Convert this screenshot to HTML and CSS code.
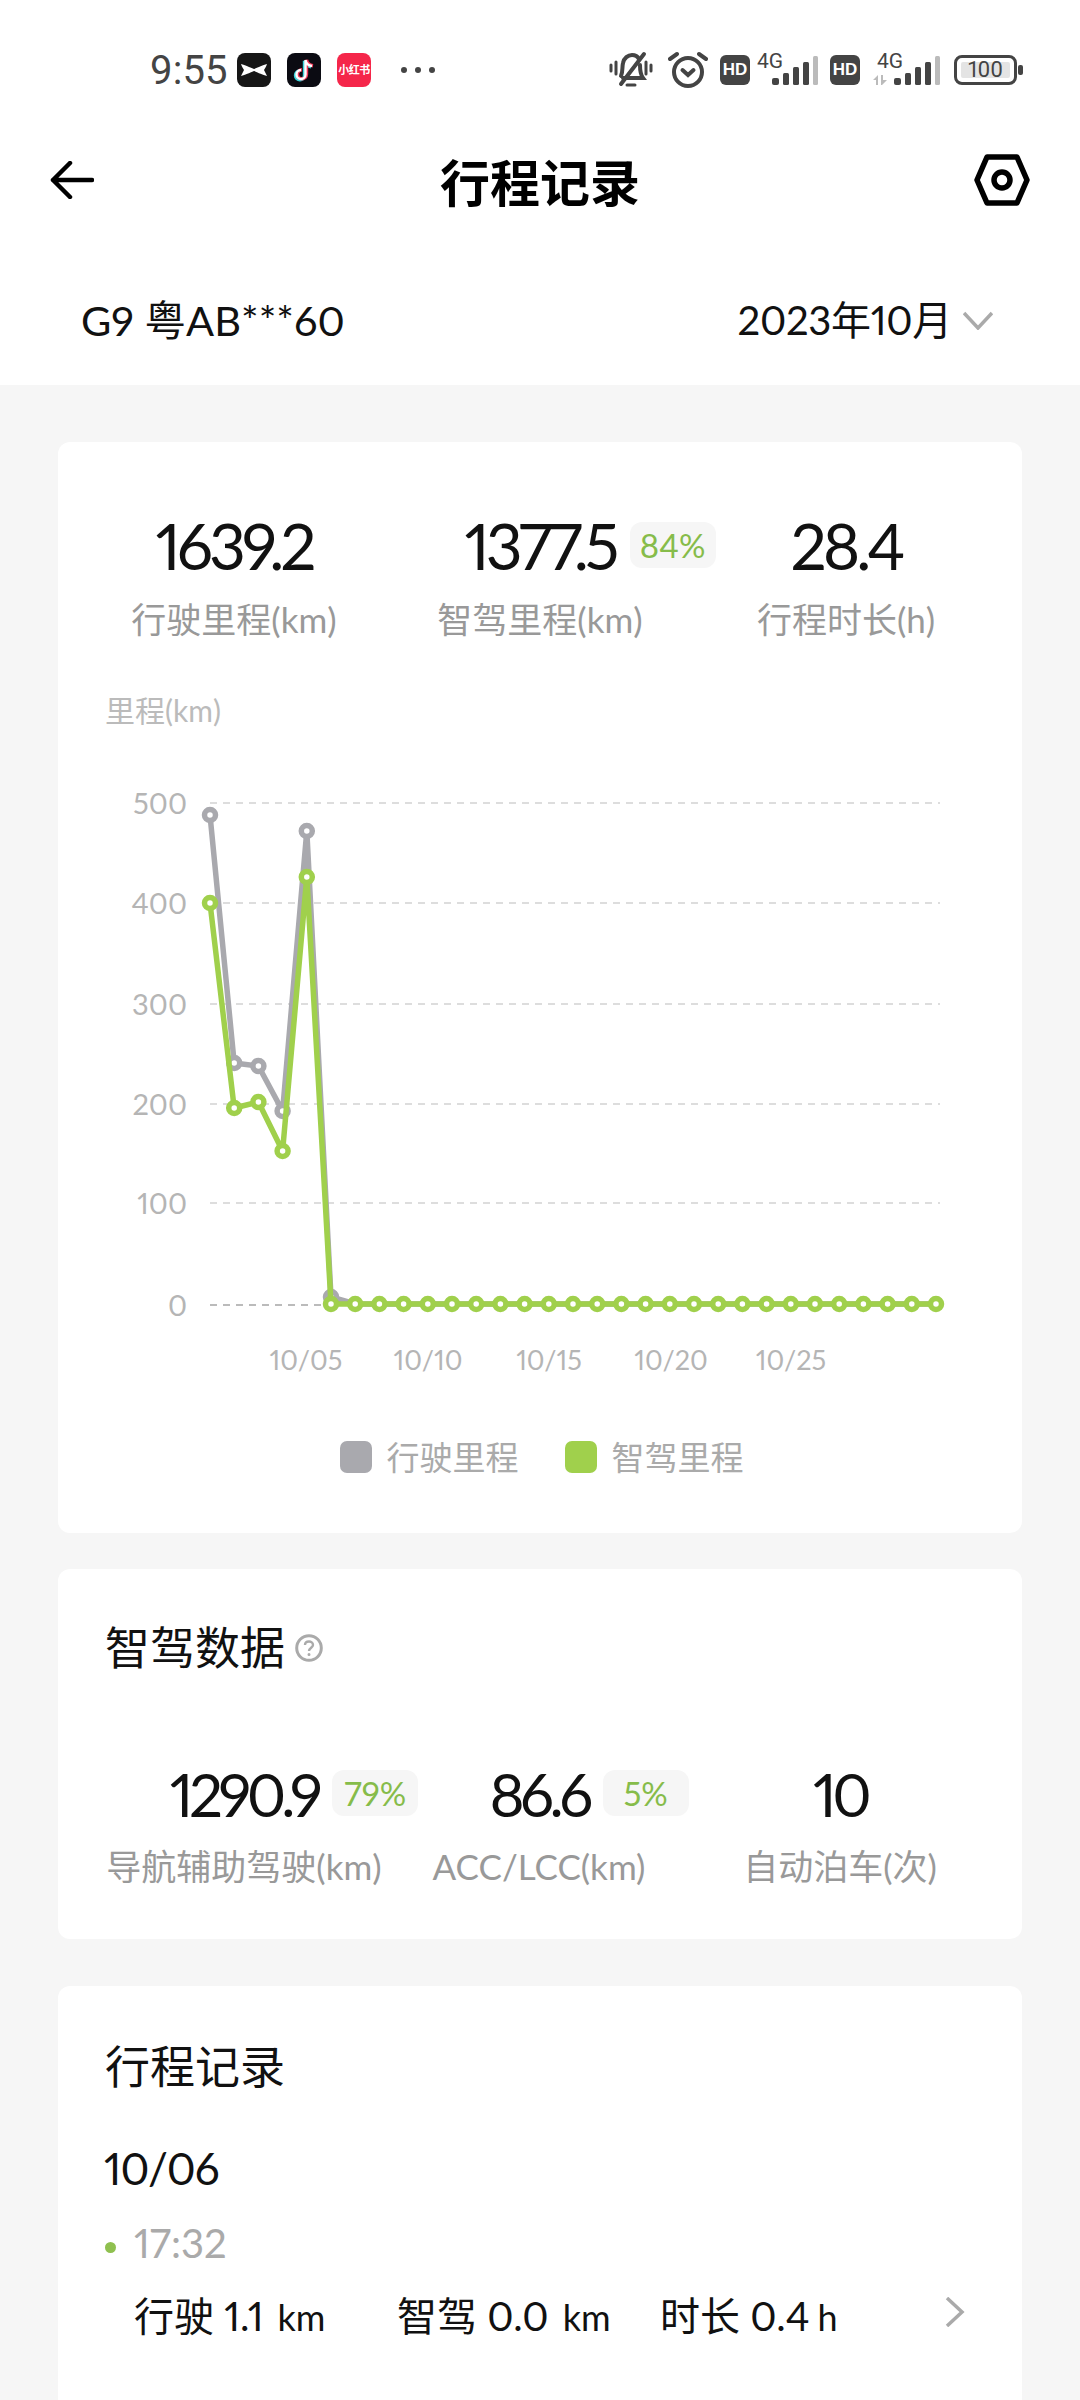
FILE: index.html
```html
<!DOCTYPE html>
<html>
<head>
    <title>行程记录</title>
    <meta name="viewport" content="width=device-width, initial-scale=1">
    <link rel="stylesheet" href="styles.css">
</head>
<body>
    <div class="top">
        <div class="status">
            <div class="status-left">
                <span class="clock">9:55</span>
                <svg class="app-icon" viewBox="0 0 34 34">
                    <rect width="34" height="34" rx="8" fill="#161616"/>
                    <path d="M4 11 C11 13 14 15 17 16 C20 15 23 13 30 11 C29 14 28 15 27 17 C28 19 29 21 30 23 C23 21 20 19 17 18 C14 19 11 21 4 23 C5 21 6 19 7 17 C6 15 5 14 4 11Z" fill="#fff"/>
                </svg>
                <svg class="app-icon" viewBox="0 0 34 34">
                    <rect width="34" height="34" rx="8" fill="#0b0b12"/>
                    <path d="M18.5 7 V21.5 A4.5 4.5 0 1 1 14 17 M18.5 7 C19 10.5 21.5 12.5 25 13" fill="none" stroke="#3fd6de" stroke-width="3.4" transform="translate(-1 .8)"/>
                    <path d="M18.5 7 V21.5 A4.5 4.5 0 1 1 14 17 M18.5 7 C19 10.5 21.5 12.5 25 13" fill="none" stroke="#f0395a" stroke-width="3.4" transform="translate(1 -.2)"/>
                    <path d="M18.5 7 V21.5 A4.5 4.5 0 1 1 14 17 M18.5 7 C19 10.5 21.5 12.5 25 13" fill="none" stroke="#fff" stroke-width="2.4"/>
                </svg>
                <span class="app-red">小红书</span>
                <span class="more"><i></i><i></i><i></i></span>
            </div>
            <div class="status-right">
                <svg class="ic-bell" viewBox="0 0 44 38" fill="none" stroke="#444" stroke-width="4" stroke-linecap="round">
                    <path d="M12 25 C14 21 13 16 14 12 C15 7 19 4 23 4 C26 4 29 6 30 8 M31 14 C31 19 31 23 34 27 H14"/>
                    <path d="M18 34 H26" stroke-width="3"/>
                    <path d="M12 33 L35 3"/>
                    <path d="M2 14 V20 M7 11 V23 M37 11 V23 M42 14 V20" stroke-width="3"/>
                </svg>
                <svg class="ic-alarm" viewBox="0 0 40 38" fill="none" stroke="#444" stroke-width="4" stroke-linecap="round">
                    <circle cx="20" cy="21" r="14"/>
                    <path d="M14.5 19 L20 24 L25.5 19"/>
                    <path d="M2 8 L9 3 M38 8 L31 3"/>
                </svg>
                <span class="hd">HD</span>
                <svg class="ic-signal" viewBox="0 -8 61 41">
                    <text class="net" x="0" y="16">4G</text>
                    <rect x="15" y="26" width="7" height="7" rx="2" fill="#444"/>
                    <rect x="26" y="21" width="6" height="12" rx="1.5" fill="#444"/>
                    <rect x="36" y="15" width="6" height="18" rx="1.5" fill="#444"/>
                    <rect x="46" y="10" width="6" height="23" rx="1.5" fill="#444"/>
                    <rect x="56" y="4" width="5" height="29" rx="1.5" fill="#bbb"/>
                </svg>
                <span class="hd">HD</span>
                <svg class="ic-signal2" viewBox="0 -8 67 41">
                    <text class="net" x="4" y="16">4G</text>
                    <path d="M0 28 L5 23 V33 H3 V28Z M8 23 H10 V28 L14 28 L8 34Z" fill="#bbb"/>
                    <rect x="21" y="26" width="7" height="7" rx="2" fill="#444"/>
                    <rect x="32" y="21" width="6" height="12" rx="1.5" fill="#444"/>
                    <rect x="42" y="15" width="6" height="18" rx="1.5" fill="#444"/>
                    <rect x="52" y="10" width="6" height="23" rx="1.5" fill="#444"/>
                    <rect x="62" y="4" width="5" height="29" rx="1.5" fill="#bbb"/>
                </svg>
                <span class="battery"><span class="battery-fill">100</span></span>
                <span class="battery-nub"></span>
            </div>
        </div>

        <div class="nav">
            <svg class="ic-back" viewBox="0 0 44 38" fill="none" stroke="#000" stroke-width="4.5" stroke-linecap="round" stroke-linejoin="round">
                <path d="M42 19 H3 M20 2 L3 19 L20 36"/>
            </svg>
            <div class="nav-title">行程记录</div>
            <svg class="ic-hex" viewBox="0 0 56 52" fill="none" stroke="#000" stroke-width="5.5" stroke-linejoin="round">
                <path d="M13 3 H43 L53 26 L43 49 H13 L3 26Z"/>
                <circle cx="28" cy="26" r="8"/>
            </svg>
        </div>

        <div class="vehicle">
            <span class="plate">G9 粤AB***60</span>
            <span class="month">2023年10月
                <svg class="ic-down" viewBox="0 0 30 19" fill="none" stroke="#aaa" stroke-width="3.5">
                    <path d="M1 2 L15 17 L29 2"/>
                </svg>
            </span>
        </div>
    </div>

    <div class="content">
        <div class="card card-summary">
            <div class="stats">
                <div class="stat">
                    <div class="stat-num">1639.2</div>
                    <div class="stat-label">行驶里程(km)</div>
                </div>
                <div class="stat">
                    <div class="stat-num">1377.5<span class="pct">84%</span></div>
                    <div class="stat-label">智驾里程(km)</div>
                </div>
                <div class="stat">
                    <div class="stat-num">28.4</div>
                    <div class="stat-label">行程时长(h)</div>
                </div>
            </div>

            <div class="axis-title">里程(km)</div>

            <!-- viewBox uses page coordinates so points read the same as the screen -->
            <svg class="chart" viewBox="58 780 964 610">
                <g class="grid">
                    <line x1="210" y1="803" x2="940" y2="803"/>
                    <line x1="210" y1="903" x2="940" y2="903"/>
                    <line x1="210" y1="1004" x2="940" y2="1004"/>
                    <line x1="210" y1="1104" x2="940" y2="1104"/>
                    <line x1="210" y1="1203" x2="940" y2="1203"/>
                    <line class="grid-zero" x1="210" y1="1305" x2="940" y2="1305"/>
                </g>
                <g class="y-labels">
                    <text x="187" y="814">500</text>
                    <text x="187" y="914">400</text>
                    <text x="187" y="1015">300</text>
                    <text x="187" y="1115">200</text>
                    <text x="187" y="1214">100</text>
                    <text x="187" y="1316">0</text>
                </g>
                <g class="x-labels">
                    <text x="306" y="1370">10/05</text>
                    <text x="428" y="1370">10/10</text>
                    <text x="549" y="1370">10/15</text>
                    <text x="671" y="1370">10/20</text>
                    <text x="791" y="1370">10/25</text>
                </g>
                <g class="series series-gray">
                    <polyline points="210,815 234.2,1063 258.4,1066 282.6,1111 306.8,831 331,1297 355.2,1304 936,1304"/>
                    <circle cx="210" cy="815" r="5.5"/>
                    <circle cx="234.2" cy="1063" r="5.5"/>
                    <circle cx="258.4" cy="1066" r="5.5"/>
                    <circle cx="282.6" cy="1111" r="5.5"/>
                    <circle cx="306.8" cy="831" r="5.5"/>
                    <circle cx="331" cy="1297" r="5.5"/>
                </g>
                <g class="series series-green">
                    <polyline points="210,903 234.2,1108 258.4,1102 282.6,1151 306.8,877 331,1304 936,1304"/>
                    <circle cx="210" cy="903" r="5.5"/>
                    <circle cx="234.2" cy="1108" r="5.5"/>
                    <circle cx="258.4" cy="1102" r="5.5"/>
                    <circle cx="282.6" cy="1151" r="5.5"/>
                    <circle cx="306.8" cy="877" r="5.5"/>
                    <circle cx="331" cy="1304" r="5.5"/>
                    <circle cx="355.2" cy="1304" r="5.5"/>
                    <circle cx="379.4" cy="1304" r="5.5"/>
                    <circle cx="403.6" cy="1304" r="5.5"/>
                    <circle cx="427.8" cy="1304" r="5.5"/>
                    <circle cx="452" cy="1304" r="5.5"/>
                    <circle cx="476.2" cy="1304" r="5.5"/>
                    <circle cx="500.4" cy="1304" r="5.5"/>
                    <circle cx="524.6" cy="1304" r="5.5"/>
                    <circle cx="548.8" cy="1304" r="5.5"/>
                    <circle cx="573" cy="1304" r="5.5"/>
                    <circle cx="597.2" cy="1304" r="5.5"/>
                    <circle cx="621.4" cy="1304" r="5.5"/>
                    <circle cx="645.6" cy="1304" r="5.5"/>
                    <circle cx="669.8" cy="1304" r="5.5"/>
                    <circle cx="694" cy="1304" r="5.5"/>
                    <circle cx="718.2" cy="1304" r="5.5"/>
                    <circle cx="742.4" cy="1304" r="5.5"/>
                    <circle cx="766.6" cy="1304" r="5.5"/>
                    <circle cx="790.8" cy="1304" r="5.5"/>
                    <circle cx="815" cy="1304" r="5.5"/>
                    <circle cx="839.2" cy="1304" r="5.5"/>
                    <circle cx="863.4" cy="1304" r="5.5"/>
                    <circle cx="887.6" cy="1304" r="5.5"/>
                    <circle cx="911.8" cy="1304" r="5.5"/>
                    <circle cx="936" cy="1304" r="5.5"/>
                </g>
            </svg>

            <div class="legend">
                <span class="legend-item"><i class="swatch swatch-gray"></i>行驶里程</span>
                <span class="legend-item"><i class="swatch swatch-green"></i>智驾里程</span>
            </div>
        </div>

        <div class="card card-assist">
            <div class="card-title">智驾数据
                <svg class="ic-help" viewBox="0 0 28 28" fill="none" stroke="#aaa" stroke-width="3">
                    <circle cx="14" cy="14" r="12.3"/>
                    <path d="M10 11 C10 8.5 12 7.5 14 7.5 C16 7.5 18 8.8 18 11 C18 13.5 14 14 14 17" stroke-width="2.4"/>
                    <circle cx="14" cy="20.5" r=".7" stroke-width="1.6"/>
                </svg>
            </div>
            <div class="stats stats-assist">
                <div class="stat">
                    <div class="stat-num stat-num-sm">1290.9<span class="pct">79%</span></div>
                    <div class="stat-label">导航辅助驾驶(km)</div>
                </div>
                <div class="stat">
                    <div class="stat-num stat-num-sm">86.6<span class="pct">5%</span></div>
                    <div class="stat-label">ACC/LCC(km)</div>
                </div>
                <div class="stat">
                    <div class="stat-num stat-num-sm">10</div>
                    <div class="stat-label">自动泊车(次)</div>
                </div>
            </div>
        </div>

        <div class="card card-trips">
            <div class="card-title">行程记录</div>
            <div class="trip-date">10/06</div>
            <div class="trip-time"><i class="dot"></i>17:32</div>
            <div class="trip-row">
                <span class="trip-cell">行驶 <b>1.1</b><small>km</small></span>
                <span class="trip-cell">智驾 <b>0.0</b><small>km</small></span>
                <span class="trip-cell">时长 <b>0.4</b><small class="unit-h">h</small></span>
                <svg class="ic-right" viewBox="0 0 20 30" fill="none" stroke="#aaa" stroke-width="3.5">
                    <path d="M2 1 L17 15 L2 29"/>
                </svg>
            </div>
        </div>
    </div>
</body>
</html>
```

FILE: styles.css
```css
html, body {
    margin: 0;
    padding: 0;
}
body {
    width: 1080px;
    height: 2400px;
    overflow: hidden;
    background: #f6f6f6;
    font-family: Lato, "Noto Sans CJK SC", sans-serif;
    font-variant-numeric: proportional-nums;
    color: #111;
}
.top {
    background: #fff;
    height: 385px;
}

/* status bar */
.status {
    height: 140px;
    display: flex;
    align-items: center;
    justify-content: space-between;
    padding: 0 57px 0 150px;
}
.status-left, .status-right {
    display: flex;
    align-items: center;
}
.clock {
    width: 87px;
    font-family: Roboto, sans-serif;
    font-size: 40px;
    color: #444;
}
.app-icon {
    width: 34px;
    height: 34px;
    margin-right: 16px;
}
.app-red {
    width: 34px;
    height: 34px;
    line-height: 34px;
    border-radius: 8px;
    background: #f5264a;
    color: #fff;
    font-size: 11px;
    font-weight: bold;
    letter-spacing: -0.5px;
    text-align: center;
    white-space: nowrap;
}
.more {
    display: flex;
    gap: 8px;
    margin-left: 30px;
}
.more i {
    width: 6px;
    height: 6px;
    border-radius: 50%;
    background: #444;
}
.ic-bell {
    width: 44px;
    height: 38px;
    margin-right: 15px;
}
.ic-alarm {
    width: 40px;
    height: 38px;
    margin-right: 12px;
}
.hd {
    width: 30px;
    height: 30px;
    line-height: 30px;
    border-radius: 6px;
    background: #444;
    color: #fff;
    font-family: "Liberation Sans", sans-serif;
    font-size: 17px;
    font-weight: bold;
    text-align: center;
}
.ic-signal {
    width: 61px;
    height: 41px;
    margin: 0 12px 11px 7px;
}
.ic-signal2 {
    width: 67px;
    height: 41px;
    margin: 0 14px 11px 13px;
}
.net {
    font-family: Roboto, sans-serif;
    font-size: 21px;
    fill: #444;
}
.battery {
    box-sizing: border-box;
    width: 63px;
    height: 30px;
    padding: 4px;
    border: 3px solid #444;
    border-radius: 8px;
    display: flex;
}
.battery-fill {
    flex: 1;
    background: #e4e4e4;
    border-radius: 2px;
    color: #444;
    font-family: Roboto, sans-serif;
    font-size: 22px;
    line-height: 16px;
    text-align: center;
}
.battery-nub {
    width: 5px;
    height: 10px;
    margin-left: 1px;
    border-radius: 2px;
    background: #444;
}

/* nav */
.nav {
    height: 80px;
    display: grid;
    grid-template-columns: 1fr auto 1fr;
    align-items: center;
    padding: 0 50px;
}
.nav-title {
    font-size: 50px;
    font-weight: 700;
    color: #000;
}
.ic-back {
    width: 44px;
    height: 38px;
}
.ic-hex {
    width: 56px;
    height: 52px;
    justify-self: end;
}

.vehicle {
    height: 60px;
    margin-top: 70px;
    display: flex;
    align-items: center;
    justify-content: space-between;
    padding: 0 87px 0 81px;
    font-size: 40px;
    line-height: 60px;
}
.plate {
    font-size: 41.5px;
}
.month {
    display: flex;
    align-items: center;
    gap: 11px;
    letter-spacing: -0.3px;
}
.ic-down {
    width: 30px;
    height: 19px;
}

/* cards */
.content {
    padding: 57px 58px 0;
}
.card {
    background: #fff;
    border-radius: 12px;
}
.card-summary {
    height: 1091px;
    padding: 69px 0 0;
    box-sizing: border-box;
}
.card-assist {
    height: 370px;
    margin-top: 36px;
    padding: 49px 30px 0 47px;
    box-sizing: border-box;
}
.card-trips {
    height: 500px;
    margin-top: 47px;
    padding: 51px 57px 0 47px;
    box-sizing: border-box;
}
.stats {
    display: grid;
    grid-template-columns: repeat(3, 306px);
    padding: 0 23px;
}
.stat {
    text-align: center;
}
.stat-num {
    position: relative;
    display: inline-block;
    font-size: 64px;
    line-height: 70px;
    letter-spacing: -4px;
}
.stat-num-sm {
    font-size: 60px;
    letter-spacing: -4.5px;
}
.pct {
    position: absolute;
    left: 100%;
    top: 11px;
    margin-left: 14px;
    width: 86px;
    height: 46px;
    line-height: 46px;
    border-radius: 12px;
    background: #f6f6f6;
    color: #86bc4a;
    font-size: 33px;
    letter-spacing: 0;
    text-align: center;
}
.stat-label {
    margin-top: 13px;
    font-size: 35px;
    line-height: 50px;
    color: #999;
    white-space: nowrap;
}
.axis-title {
    margin: 46px 0 0 47px;
    font-size: 30px;
    line-height: 40px;
    color: #bbb;
}

/* chart */
.chart {
    display: block;
    width: 964px;
    height: 610px;
    margin-top: 50px;
}
.grid line {
    stroke: #ddd;
    stroke-width: 2;
    stroke-dasharray: 7 6;
}
.grid .grid-zero {
    stroke: #bbb;
}
.y-labels text, .x-labels text {
    font-size: 29px;
    fill: #b5b5b5;
}
.y-labels text {
    text-anchor: end;
}
.x-labels text {
    font-size: 27px;
    text-anchor: middle;
}
.series polyline {
    fill: none;
    stroke-width: 5.5;
    stroke-linejoin: round;
}
.series circle {
    fill: #fff;
    stroke-width: 5.5;
}
.series-gray polyline, .series-gray circle {
    stroke: #a9a9ae;
}
.series-green polyline, .series-green circle {
    stroke: #a0d04c;
}
.legend {
    display: flex;
    justify-content: center;
    gap: 46px;
    margin-top: 42px;
    padding-left: 3px;
    line-height: 50px;
    font-size: 33px;
    color: #aaa;
}
.legend-item {
    display: flex;
    align-items: center;
    gap: 15px;
}
.swatch {
    width: 32px;
    height: 32px;
    border-radius: 7px;
}
.swatch-gray {
    background: #a9a9ae;
}
.swatch-green {
    background: #a0d04c;
}

.card-title {
    display: flex;
    align-items: center;
    gap: 10px;
    font-size: 45px;
    line-height: 60px;
    color: #111;
}
.ic-help {
    width: 28px;
    height: 28px;
}
.stats-assist {
    grid-template-columns: 292px 298px 304px;
    margin: 81px 0 0 -7px;
    padding: 0;
}
.stats-assist .stat-label {
    margin-top: 12px;
}

/* trips */
.trip-date {
    margin: 41px 0 0 -1px;
    font-size: 44px;
    line-height: 60px;
    letter-spacing: -1px;
}
.trip-time {
    display: flex;
    align-items: center;
    margin-top: 20px;
    font-size: 40px;
    line-height: 50px;
    color: #aaa;
}
.dot {
    width: 11px;
    height: 11px;
    margin: 8px 18px 0 0;
    border-radius: 50%;
    background: #8fc04f;
}
.trip-row {
    display: flex;
    align-items: center;
    margin: 23px 0 0 29px;
    font-size: 40px;
    line-height: 50px;
}
.trip-cell {
    width: 263px;
    white-space: nowrap;
}
.trip-cell b {
    font-weight: 400;
}
.trip-cell small {
    margin-left: 14px;
    font-size: 36px;
}
.trip-cell .unit-h {
    margin-left: 8px;
}
.ic-right {
    width: 20px;
    height: 30px;
    margin: -10px 0 0 auto;
}
```
